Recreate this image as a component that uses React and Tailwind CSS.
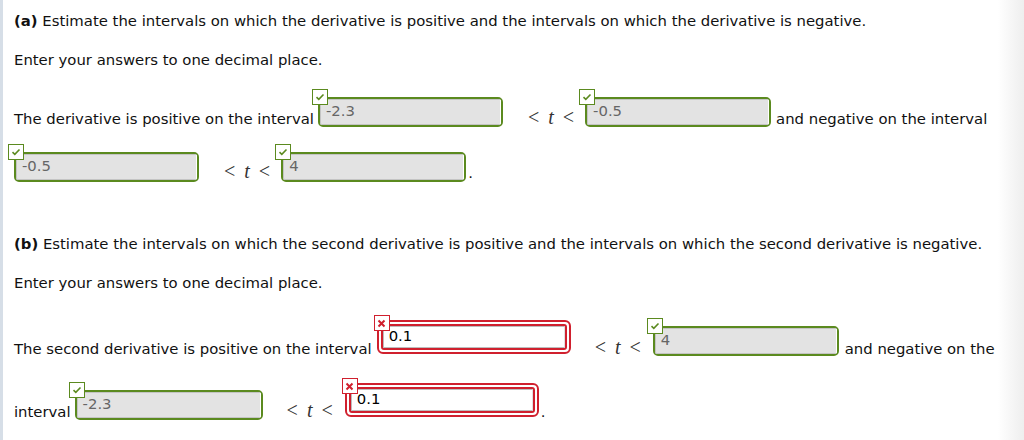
import React from 'react';

const font = { fontFamily: '"DejaVu Sans", Verdana, sans-serif' };

function CheckBadge() {
  return (
    <span className="absolute -left-[8px] -top-[10px] z-10 flex h-[16px] w-[16px] items-center justify-center border border-[#5b8a1f] bg-white">
      <svg width="10" height="8" viewBox="0 0 10 8">
        <path d="M1.5 4.2 L3.8 6.3 L8.5 1.5" fill="none" stroke="#5b8a1f" strokeWidth="1.6" />
      </svg>
    </span>
  );
}

function CrossBadge() {
  return (
    <span className="absolute -left-[5px] -top-[7px] z-10 flex h-[16px] w-[16px] items-center justify-center border border-[#d0202e] bg-white">
      <svg width="9" height="9" viewBox="0 0 9 9">
        <path d="M1.5 1.5 L7.5 7.5 M7.5 1.5 L1.5 7.5" fill="none" stroke="#d0202e" strokeWidth="2" />
      </svg>
    </span>
  );
}

function GoodBox({ value, w = 'w-[185px]', className = '' }) {
  return (
    <span className={`relative inline-flex h-[30px] ${w} shrink-0 rounded-[5px] border-2 border-[#5b8a1f] ${className}`}>
      <CheckBadge />
      <span className="flex h-full w-full items-start rounded-[2px] border border-[#c4c4c4] border-r-white bg-[#e3e3e3] pl-[5px] pt-[3px] text-[14.85px] leading-[17px] text-[#666]">
        {value}
      </span>
    </span>
  );
}

function BadBox({ value, className = '' }) {
  return (
    <span className={`relative inline-flex h-[34px] w-[194px] shrink-0 rounded-[6px] border-2 border-[#d0202e] bg-white p-[2px] ${className}`}>
      <CrossBadge />
      <span className="flex h-full w-full rounded-[3px] border-2 border-[#d0202e]">
        <span className="flex h-full w-full items-start border border-[#bdbdbd] border-r-[#e0e0e0] bg-white pl-[5px] pt-[1px] text-[14.85px] leading-[17px] text-black">
          {value}
        </span>
      </span>
    </span>
  );
}

function Ineq({ className = '' }) {
  return (
    <span
      className={`flex shrink-0 items-end gap-[9px] text-[20px] leading-[20px] text-[#333] ${className}`}
      style={{ fontFamily: '"Liberation Serif", "Times New Roman", serif' }}
    >
      <span>&lt;</span>
      <i>t</i>
      <span>&lt;</span>
    </span>
  );
}

export default function App() {
  return (
    <div className="relative h-[440px] w-[1024px] overflow-hidden bg-white text-[14.85px] leading-[17px] text-[#111]" style={font}>
      <div className="absolute left-0 top-0 h-full w-[3px] bg-[#d6dee7]" />
      <div className="absolute right-0 top-0 h-full w-[26px] bg-gradient-to-r from-white to-[#eeeeee]" />

      <div className="relative px-[14px]">
        <p className="pt-[13px]">
          <b>(a)</b> Estimate the intervals on which the derivative is positive and the intervals on which the derivative is negative.
        </p>
        <p className="mt-[22px]">Enter your answers to one decimal place.</p>

        <div className="mt-[28px] flex items-end whitespace-nowrap">
          <span>The derivative is positive on the interval</span>
          <GoodBox value="-2.3" className="mb-[1px] ml-[4px]" />
          <Ineq className="mb-[1px] ml-[25px]" />
          <GoodBox value="-0.5" w="w-[186px]" className="mb-[1px] ml-[11px]" />
          <span className="ml-[5px]">and negative on the interval</span>
        </div>

        <div className="mt-[24px] flex items-end whitespace-nowrap">
          <GoodBox value="-0.5" />
          <Ineq className="mb-[1px] ml-[25px]" />
          <GoodBox value="4" className="ml-[11px]" />
          <span className="ml-[2px]">.</span>
        </div>

        <p className="mt-[54px]">
          <b>(b)</b> Estimate the intervals on which the second derivative is positive and the intervals on which the second derivative is negative.
        </p>
        <p className="mt-[22px]">Enter your answers to one decimal place.</p>

        <div className="mt-[28px] flex items-end whitespace-nowrap">
          <span>The second derivative is positive on the interval</span>
          <BadBox value="0.1" className="mb-[4px] ml-[5px]" />
          <Ineq className="mb-[1px] ml-[24px]" />
          <GoodBox value="4" w="w-[186px]" className="mb-[2px] ml-[12px]" />
          <span className="ml-[6px]">and negative on the</span>
        </div>

        <div className="mt-[25px] flex items-end whitespace-nowrap">
          <span>interval</span>
          <GoodBox value="-2.3" w="w-[188px]" className="mb-[1px] ml-[4px]" />
          <Ineq className="mb-[1px] ml-[24px]" />
          <BadBox value="0.1" className="mb-[4px] ml-[12px] w-[192px]" />
          <span className="ml-[2px]">.</span>
        </div>
      </div>
    </div>
  );
}
